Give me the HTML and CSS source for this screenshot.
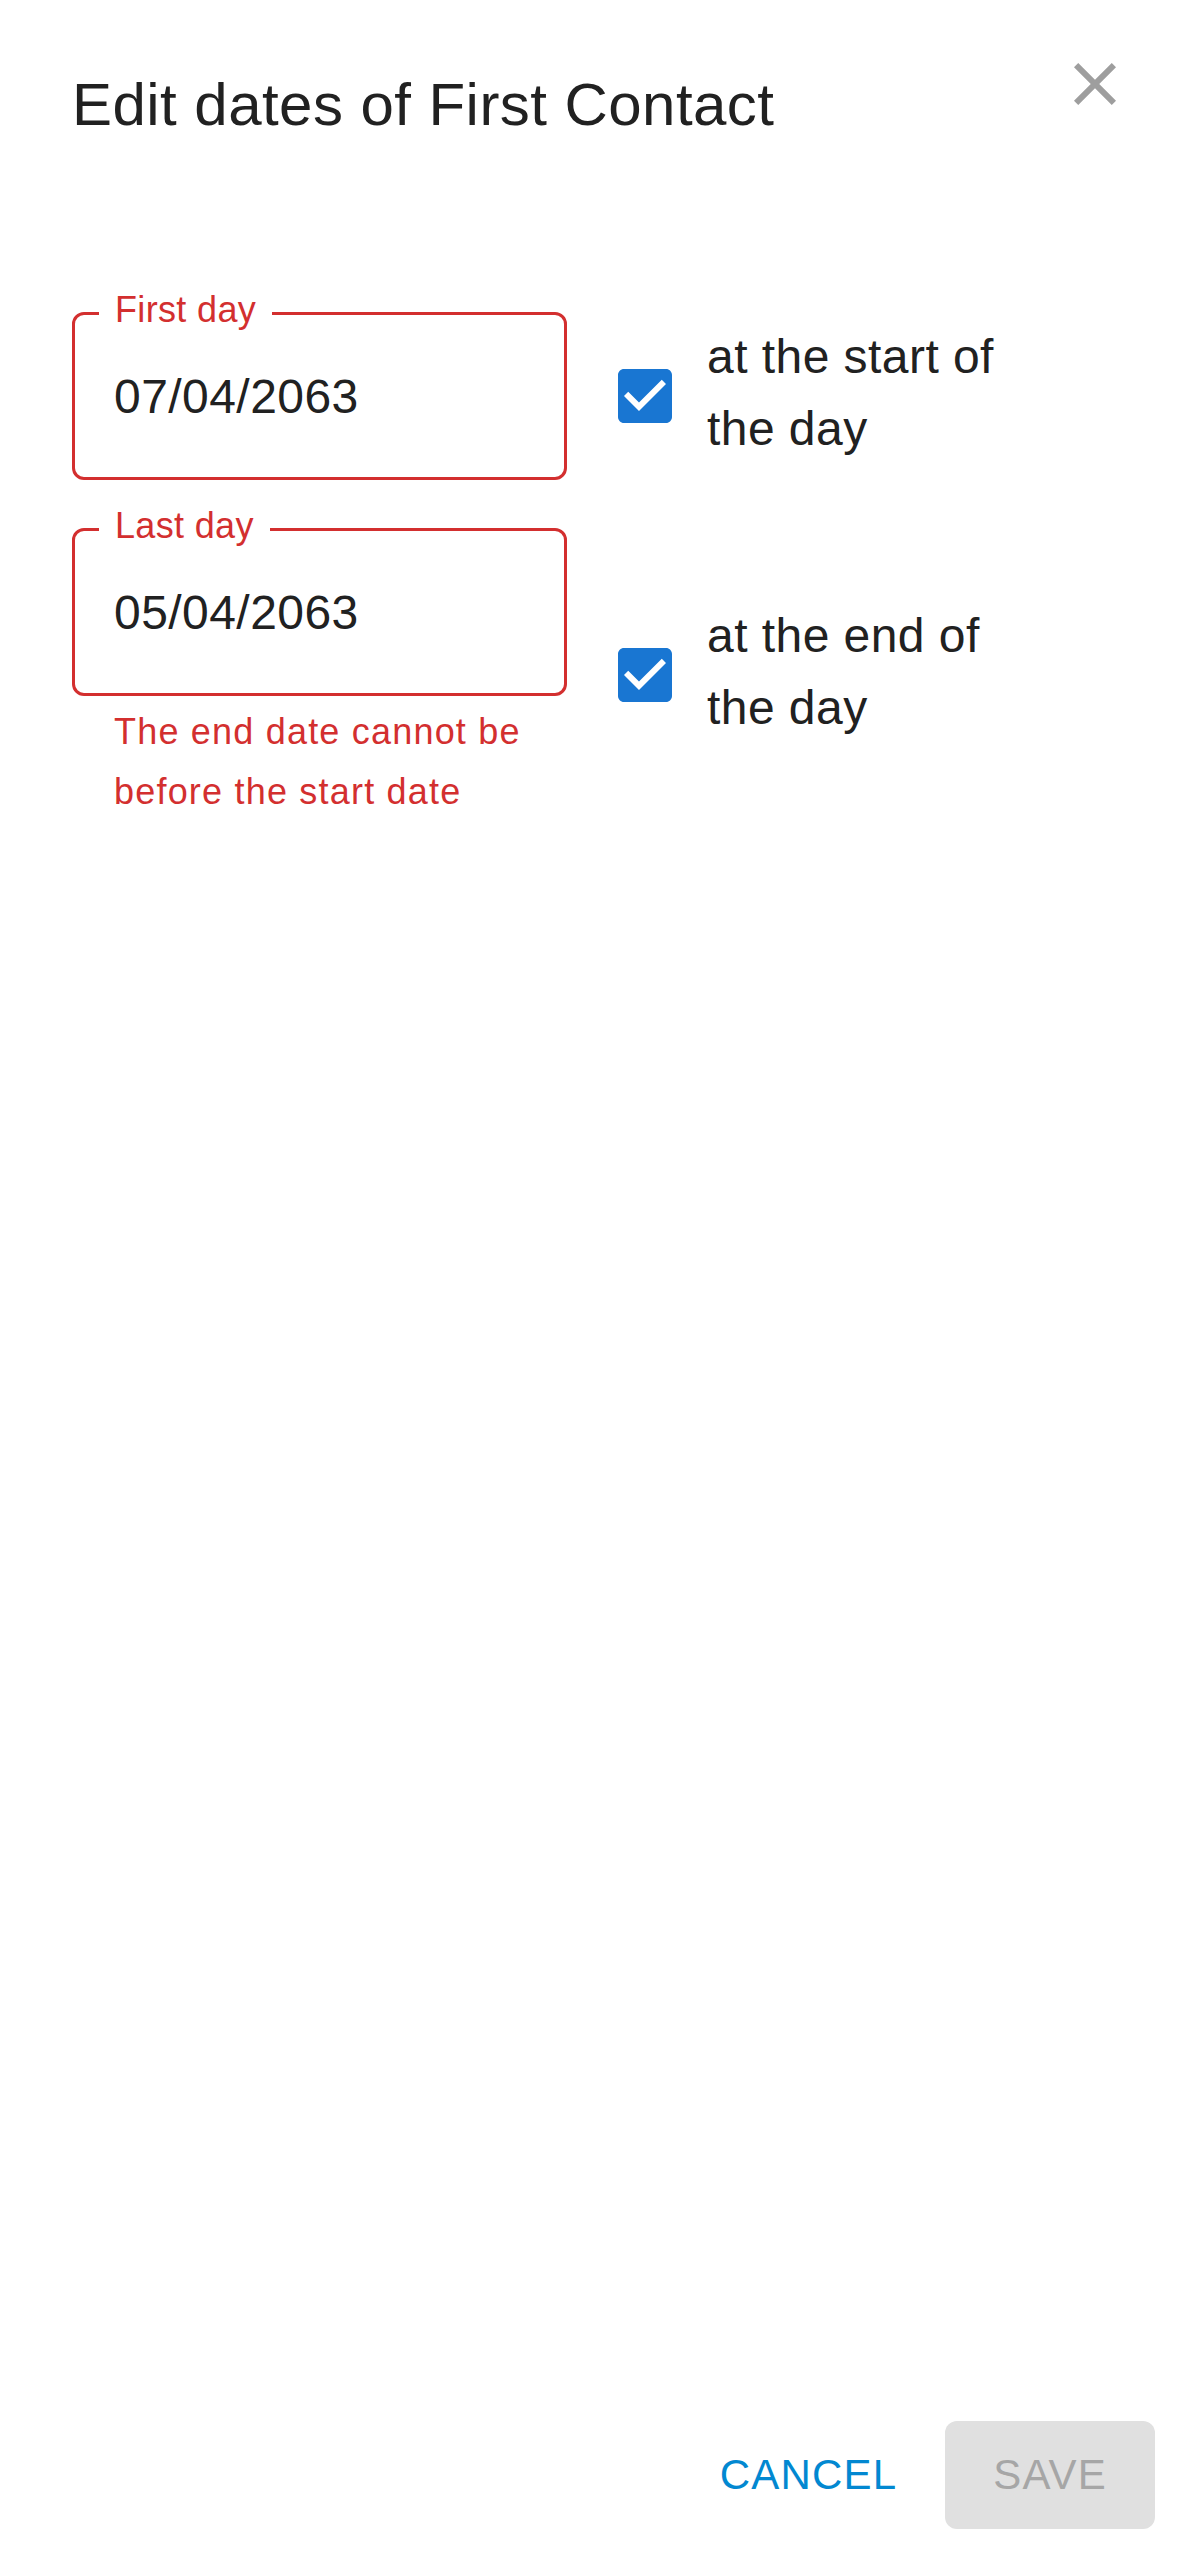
FILE: index.html
```html
<!DOCTYPE html>
<html lang="en">
<head>
<meta charset="utf-8">
<title>Edit dates of First Contact</title>
<link rel="stylesheet" href="styles.css">
</head>
<body>
<div class="dialog">
  <header class="dialog-header">
    <h2 class="dialog-title">Edit dates of First Contact</h2>
    <button class="icon-button" aria-label="close">
      <svg viewBox="0 0 24 24" class="close-icon"><path d="M19 6.41L17.59 5 12 10.59 6.41 5 5 6.41 10.59 12 5 17.59 6.41 19 12 13.41 17.59 19 19 17.59 13.41 12z"/></svg>
    </button>
  </header>

  <main class="dialog-content">
    <div class="row">
      <div class="field-col">
        <div class="field">
          <span class="field-label">First day</span>
          <div class="field-value">07/04/2063</div>
        </div>
      </div>
      <label class="check-control">
        <span class="checkbox">
          <svg viewBox="0 0 24 24" class="check-icon"><path d="M19 3H5c-1.11 0-2 .9-2 2v14c0 1.1.89 2 2 2h14c1.11 0 2-.9 2-2V5c0-1.1-.89-2-2-2zm-9 14l-5-5 1.41-1.41L10 14.17l7.59-7.59L19 8l-9 9z"/></svg>
        </span>
        <span class="check-label">at the start of the day</span>
      </label>
    </div>

    <div class="row">
      <div class="field-col">
        <div class="field">
          <span class="field-label">Last day</span>
          <div class="field-value">05/04/2063</div>
        </div>
        <p class="helper-text">The end date cannot be before the start date</p>
      </div>
      <label class="check-control">
        <span class="checkbox">
          <svg viewBox="0 0 24 24" class="check-icon"><path d="M19 3H5c-1.11 0-2 .9-2 2v14c0 1.1.89 2 2 2h14c1.11 0 2-.9 2-2V5c0-1.1-.89-2-2-2zm-9 14l-5-5 1.41-1.41L10 14.17l7.59-7.59L19 8l-9 9z"/></svg>
        </span>
        <span class="check-label">at the end of the day</span>
      </label>
    </div>
  </main>

  <footer class="dialog-actions">
    <button class="btn btn-text">Cancel</button>
    <button class="btn btn-contained" disabled>Save</button>
  </footer>
</div>
</body>
</html>
```

FILE: styles.css
```css
* {
  box-sizing: border-box;
}

html, body {
  margin: 0;
  padding: 0;
  background: #ffffff;
}

body {
  font-family: "Liberation Sans", Arial, sans-serif;
  color: #212121;
}

.dialog {
  display: flex;
  flex-direction: column;
  min-height: 100vh;
}

.dialog-header {
  display: flex;
  justify-content: space-between;
  align-items: flex-start;
  padding: 24px 24px 0 72px;
}

.dialog-title {
  margin: 33px 0 0 0;
  font-size: 60px;
  line-height: 96px;
  font-weight: 400;
  letter-spacing: 0.45px;
  color: #212121;
}

.icon-button {
  width: 120px;
  height: 120px;
  padding: 24px;
  border: 0;
  background: transparent;
  display: flex;
  align-items: center;
  justify-content: center;
}

.close-icon {
  width: 72px;
  height: 72px;
  fill: #9e9e9e;
  display: block;
}

.dialog-content {
  padding: 159px 72px 0 72px;
  display: flex;
  flex-direction: column;
  gap: 48px;
}

.row {
  display: grid;
  grid-template-columns: 495px 1fr;
  column-gap: 48px;
  align-items: center;
}

.field {
  position: relative;
  height: 168px;
  border: 3px solid #d32f2f;
  border-radius: 12px;
  padding: 46.5px 39px 0 39px;
}

.field-label {
  position: absolute;
  left: 24px;
  top: -31px;
  padding: 0 16px;
  background: #ffffff;
  color: #d32f2f;
  font-size: 36px;
  line-height: 51.75px;
  letter-spacing: 0.34px;
  white-space: nowrap;
}

.field-value {
  font-size: 48px;
  line-height: 69px;
  letter-spacing: 0.45px;
  color: #212121;
}

.helper-text {
  margin: 6px 42px 0 42px;
  font-size: 36px;
  line-height: 59.76px;
  letter-spacing: 1.2px;
  color: #d32f2f;
}

.check-control {
  display: flex;
  align-items: center;
  margin-left: -33px;
  margin-right: 48px;
}

.checkbox {
  flex: none;
  padding: 27px 26px 27px 27px;
  display: flex;
}

.check-icon {
  width: 72px;
  height: 72px;
  fill: #1976d2;
  display: block;
}

.check-label {
  max-width: 340px;
  margin-bottom: 6px;
  font-size: 48px;
  line-height: 72px;
  letter-spacing: 0.45px;
  color: #212121;
}

.dialog-actions {
  margin-top: auto;
  display: flex;
  justify-content: flex-end;
  align-items: center;
  gap: 24px;
  padding: 24px;
}

.btn {
  font-family: "Liberation Sans", Arial, sans-serif;
  font-size: 42px;
  font-weight: 400;
  line-height: 72px;
  letter-spacing: 1.2px;
  text-transform: uppercase;
  border: 0;
  border-radius: 12px;
  height: 108px;
  padding: 18px 24px;
  background: transparent;
}

.btn-text {
  color: #0288d1;
}

.btn-contained {
  min-width: 192px;
  padding: 18px 48px;
  background: #e0e0e0;
  color: #a6a6a6;
}
```
